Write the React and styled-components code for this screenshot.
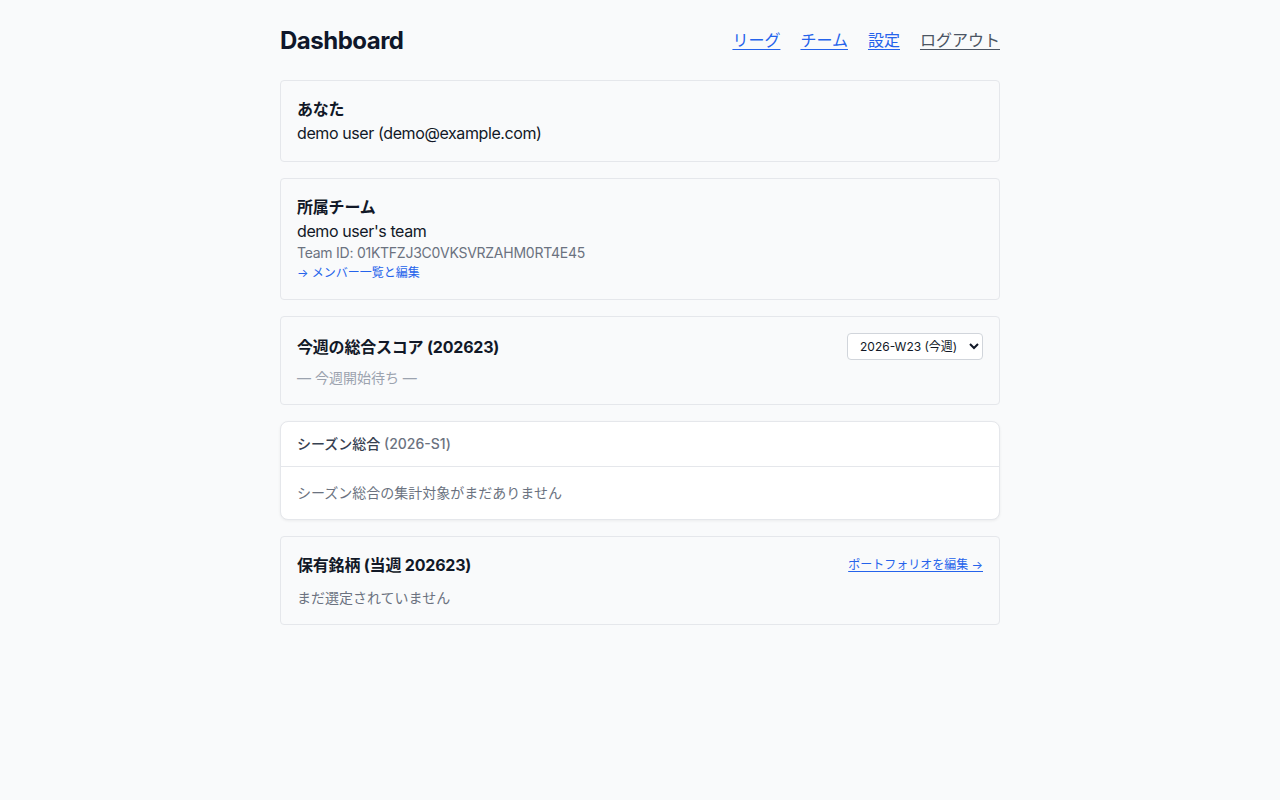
import React from "react";
import styled, { createGlobalStyle } from "styled-components";

const Global = createGlobalStyle`
  html, body { margin: 0; padding: 0; background: #f9fafb; }
  body {
    font-family: Inter, "Noto Sans CJK JP", "Noto Sans", sans-serif;
    color: #111827;
    -webkit-font-smoothing: antialiased;
  }
`;

const Page = styled.main`
  width: 720px;
  margin: 0 auto;
  padding: 24px 0 40px;
  display: flex;
  flex-direction: column;
  gap: 16px;
`;

const Header = styled.header`
  display: flex;
  align-items: center;
  justify-content: space-between;
  height: 32px;
  margin-bottom: 8px;
`;

const Title = styled.h1`
  margin: 2px 0 0;
  font-size: 24px;
  line-height: 32px;
  font-weight: 700;
  color: #0f172a;
  letter-spacing: -0.5px;
`;

const Nav = styled.nav`
  display: flex;
  gap: 20px;
`;

const NavLink = styled.a`
  font-size: 16px;
  line-height: 24px;
  color: ${(p) => (p.$muted ? "#4b5563" : "#2563eb")};
  text-decoration: underline;
  text-underline-offset: 3px;
  cursor: pointer;
`;

const Card = styled.section`
  background: #f9fafb;
  border: 1px solid #e5e7eb;
  border-radius: 4px;
  padding: 16px;
  display: flex;
  flex-direction: column;
  align-items: stretch;
`;

const CardTitle = styled.h2`
  margin: 0;
  font-size: 16px;
  line-height: 24px;
  font-weight: 700;
  color: #111827;
  letter-spacing: -0.2px;
`;

const Body = styled.div`
  font-size: 16px;
  line-height: 24px;
  color: #111827;
  letter-spacing: -0.4px;
`;

const Meta = styled.div`
  font-size: 14px;
  line-height: 20px;
  color: #6b7280;
  letter-spacing: -0.25px;
`;

const SmallLink = styled.a`
  display: block;
  align-self: ${(p) => (p.$underline ? "auto" : "flex-start")};
  font-size: 12px;
  line-height: 20px;
  color: #2563eb;
  text-decoration: ${(p) => (p.$underline ? "underline" : "none")};
  text-underline-offset: 2px;
  cursor: pointer;
`;

const Row = styled.div`
  display: flex;
  align-items: center;
  justify-content: space-between;
`;

const Select = styled.select`
  width: 136px;
  height: 27px;
  font-family: Inter, "Noto Sans CJK JP", sans-serif;
  font-size: 12px;
  color: #111827;
  background: #fff;
  border: 1px solid #d1d5db;
  border-radius: 4px;
  padding: 0 6px 0 8px;
`;

const Note = styled.p`
  margin: ${(p) => p.$mt || "8px"} 0 0;
  font-size: 14px;
  line-height: 20px;
  color: ${(p) => (p.$light ? "#9ca3af" : "#6b7280")};
`;

const Panel = styled.section`
  background: #fff;
  border: 1px solid #e5e7eb;
  border-radius: 8px;
  box-shadow: 0 1px 3px rgba(0, 0, 0, 0.06);
  overflow: hidden;
`;

const PanelHead = styled.div`
  padding: 12px 16px;
  border-bottom: 1px solid #e5e7eb;
  font-size: 14px;
  line-height: 20px;
  font-weight: 500;
  color: #374151;
`;

const Sub = styled.span`
  color: #6b7280;
`;

const PanelBody = styled.div`
  padding: 16px;
  font-size: 14px;
  line-height: 20px;
  color: #6b7280;
`;

export default function App() {
  return (
    <>
      <Global />
      <Page>
        <Header>
          <Title>Dashboard</Title>
          <Nav>
            <NavLink>リーグ</NavLink>
            <NavLink>チーム</NavLink>
            <NavLink>設定</NavLink>
            <NavLink $muted>ログアウト</NavLink>
          </Nav>
        </Header>

        <Card>
          <CardTitle>あなた</CardTitle>
          <Body>demo user (demo@example.com)</Body>
        </Card>

        <Card>
          <CardTitle>所属チーム</CardTitle>
          <Body>demo user's team</Body>
          <Meta>Team ID: 01KTFZJ3C0VKSVRZAHM0RT4E45</Meta>
          <SmallLink>→ メンバー一覧と編集</SmallLink>
        </Card>

        <Card>
          <Row>
            <CardTitle>今週の総合スコア (202623)</CardTitle>
            <Select defaultValue="w23">
              <option value="w23">2026-W23 (今週)</option>
            </Select>
          </Row>
          <Note $light>— 今週開始待ち —</Note>
        </Card>

        <Panel>
          <PanelHead>
            シーズン総合 <Sub>(2026-S1)</Sub>
          </PanelHead>
          <PanelBody>シーズン総合の集計対象がまだありません</PanelBody>
        </Panel>

        <Card>
          <Row>
            <CardTitle>保有銘柄 (当週 202623)</CardTitle>
            <SmallLink $underline>ポートフォリオを編集 →</SmallLink>
          </Row>
          <Note $mt="11px">まだ選定されていません</Note>
        </Card>
      </Page>
    </>
  );
}
